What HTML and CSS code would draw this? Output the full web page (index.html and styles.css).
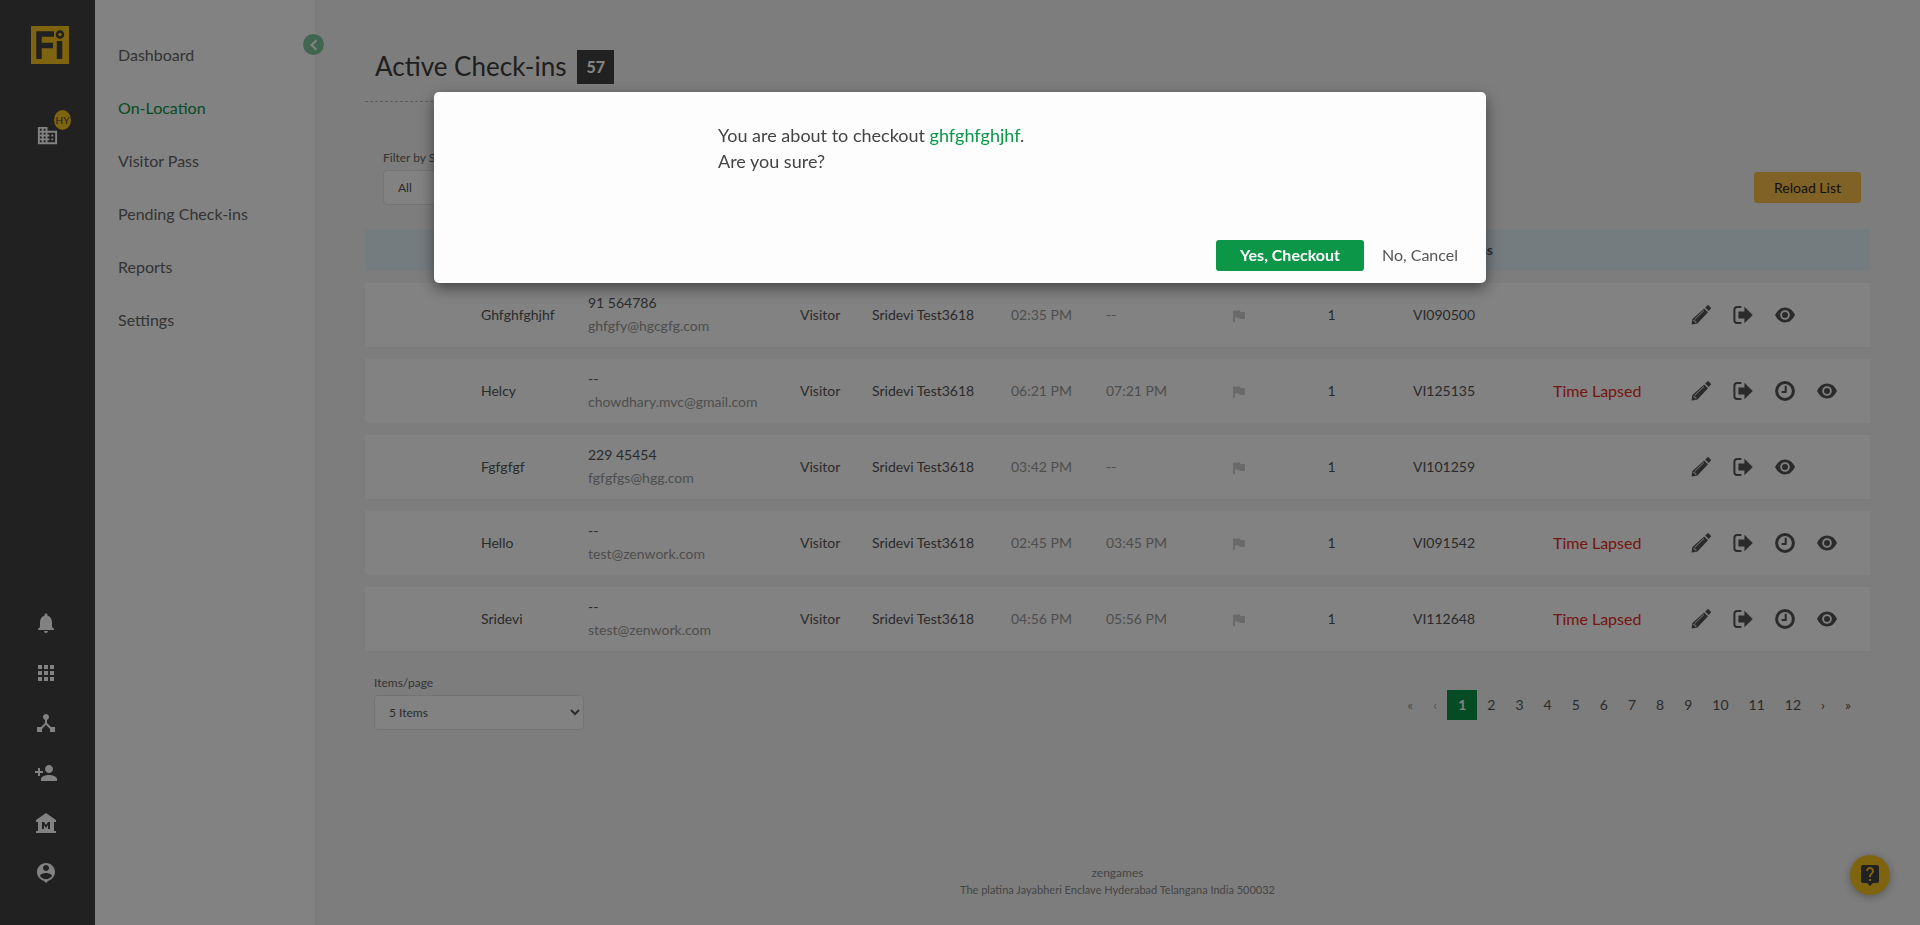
FILE: index.html
```
<!DOCTYPE html>
<html lang="en">
<head>
<meta charset="utf-8">
<title>Active Check-ins</title>
<link rel="stylesheet" href="styles.css">
</head>
<body>
<svg class="sprite" aria-hidden="true">
  <symbol id="pencil" viewBox="0 0 20 20"><path d="M14.2 2.6 16.2.6q.8-.8 1.6 0l1.8 1.8q.8.8 0 1.6l-2 2z"/><path d="M13.2 3.4 17 7.2 6.2 18.8 0.6 19.6 1.2 14.2z"/><path class="cut" d="M3.6 14.6 13 5.4M2.2 15.6l2.4.6.4 2"/></symbol>
  <symbol id="leave" viewBox="0 0 20 20"><path class="line" d="M8.4 2H4.2Q1.4 2 1.4 4.8v10.4Q1.4 18 4.2 18h4.2"/><path d="M5.4 6.4h6V1.8l8.4 8.2-8.4 8.2v-4.6h-6z"/></symbol>
  <symbol id="clock" viewBox="0 0 20 20"><circle class="ring" cx="10" cy="10" r="8.4"/><path class="line" d="M10.7 4.8v6.1H6.6"/></symbol>
  <symbol id="eye" viewBox="0 0 20 20"><path fill-rule="evenodd" d="M0 10Q3.6 2.6 10 2.6T20 10Q16.4 17.4 10 17.4T0 10zM10 5.2a4.8 4.8 0 1 0 0 9.6 4.8 4.8 0 1 0 0-9.6z"/><circle cx="10" cy="10" r="3"/></symbol>
  <symbol id="flag" viewBox="0 0 12 12"><path d="M0 .6h7l.6 1.4H12v7H6.6L6 7.400H2V12H0z"/></symbol>
</svg>

<nav class="rail" aria-label="Main">
  <a class="logo" href="#" aria-label="Home">
    <svg viewBox="0 0 38 38" width="38" height="38"><rect width="38" height="38" fill="#f9c41f"/><g fill="none" stroke="#414141"><path stroke-width="5.500" d="M8 33V5.500M5.500 8H23M8 19.500H22M28.500 15v18"/><circle cx="29" cy="8.500" r="3" stroke-width="2.500"/></g></svg>
  </a>
  <a class="site" href="#" aria-label="Location">
    <svg viewBox="0 0 24 24" width="23" height="23"><path d="M12 7V3H2v18h20V7H12zM6 19H4v-2h2v2zm0-4H4v-2h2v2zm0-4H4V9h2v2zm0-4H4V5h2v2zm4 12H8v-2h2v2zm0-4H8v-2h2v2zm0-4H8V9h2v2zm0-4H8V5h2v2zm10 12h-8v-2h2v-2h-2v-2h2v-2h-2V9h8v10zm-2-8h-2v2h2v-2zm0 4h-2v2h2v-2z"/></svg>
    <span class="initials">HY</span>
  </a>
  <div class="rail-links">
    <a href="#" aria-label="Notifications"><svg viewBox="0 0 24 24"><path d="M12 22c1.100 0 2-.9 2-2h-4c0 1.100.89 2 2 2zm6-6v-5c0-3.070-1.640-5.640-4.500-6.320V4c0-.83-.67-1.500-1.500-1.500s-1.500.67-1.500 1.500v.68C7.630 5.360 6 7.920 6 11v5l-2 2v1h16v-1l-2-2z"/></svg></a>
    <a href="#" aria-label="Apps"><svg viewBox="0 0 24 24"><path d="M4 8h4V4H4v4zm6 12h4v-4h-4v4zm-6 0h4v-4H4v4zm0-6h4v-4H4v4zm6 0h4v-4h-4v4zm6-10v4h4V4h-4zm-6 4h4V4h-4v4zm6 6h4v-4h-4v4zm0 6h4v-4h-4v4z"/></svg></a>
    <a href="#" aria-label="Devices"><svg viewBox="0 0 24 24"><path d="M17 16l-4-4V8.820C14.160 8.400 15 7.300 15 6c0-1.660-1.340-3-3-3S9 4.340 9 6c0 1.300.84 2.400 2 2.820V12l-4 4H3v5h5v-3.050l4-4.200 4 4.200V21h5v-5h-4z"/></svg></a>
    <a href="#" aria-label="Add person"><svg viewBox="0 0 24 24"><path d="M15 12c2.210 0 4-1.790 4-4s-1.790-4-4-4-4 1.790-4 4 1.790 4 4 4zm-9-2V7H4v3H1v2h3v3h2v-3h3v-2H6zm9 4c-2.670 0-8 1.340-8 4v2h16v-2c0-2.660-5.330-4-8-4z"/></svg></a>
    <a href="#" aria-label="Sites"><svg viewBox="0 0 24 24"><path d="M22 11V9L12 2 2 9v2h2v9H2v2h20v-2h-2v-9h2zm-6 7h-2v-4l-2 3-2-3v4H8v-7h2l2 3 2-3h2v7z"/></svg></a>
    <a href="#" aria-label="Profile"><svg viewBox="0 0 24 24"><path d="M12 2c-4.970 0-9 4.030-9 9 0 4.170 2.840 7.670 6.690 8.690L12 22l2.310-2.310C18.160 18.670 21 15.170 21 11c0-4.970-4.030-9-9-9zm0 2c1.660 0 3 1.340 3 3s-1.340 3-3 3-3-1.340-3-3 1.340-3 3-3zm0 14.300c-2.500 0-4.710-1.280-6-3.220.03-1.990 4-3.080 6-3.080 1.990 0 5.970 1.090 6 3.080-1.290 1.940-3.500 3.220-6 3.220z"/></svg></a>
  </div>
</nav>

<nav class="sidebar" aria-label="Section">
  <a href="#">Dashboard</a>
  <a class="current" href="#">On-Location</a>
  <a href="#">Visitor Pass</a>
  <a href="#">Pending Check-ins</a>
  <a href="#">Reports</a>
  <a href="#">Settings</a>
  <button class="collapse" type="button" aria-label="Collapse menu"><svg viewBox="0 0 12 12" width="12" height="12"><path d="M8.500 1.200 3.600 6l4.900 4.800"/></svg></button>
</nav>

<main class="main">
  <header class="heading"><h1>Active Check-ins</h1><span class="count">57</span></header>

  <form class="filters">
    <div class="field short"><label for="status">Filter by Status</label><select id="status"><option>All</option></select></div>
    <div class="field short"><select aria-label="Option"><option>Choose your option</option></select></div>
    <div class="field"><input type="text" aria-label="Search" placeholder="Type to search"></div>
    <button class="reload" type="button">Reload List</button>
  </form>

  <table class="visits">
    <colgroup><col class="w103"><col class="w107"><col class="w212"><col class="w72"><col class="w140"><col class="w95"><col class="w95"><col class="w100"><col class="w85"><col class="w137"><col class="w159"><col class="w200"></colgroup>
    <thead><tr><th></th><th></th><th></th><th></th><th></th><th></th><th></th><th></th><th></th><th class="pass">Visitor Pass</th><th></th><th></th></tr></thead>
    <tbody>
      <tr><td></td><td>Ghfghfghjhf</td><td>91 564786<br><span class="soft">ghfgfy@hgcgfg.com</span></td><td>Visitor</td><td>Sridevi Test3618</td><td class="time">02:35 PM</td><td class="time">--</td><td class="mid"><svg class="flag"><use href="#flag"/></svg></td><td class="mid">1</td><td class="mid code">VI090500</td><td></td>
        <td><div class="actions"><button type="button" aria-label="Edit"><svg><use href="#pencil"/></svg></button><button type="button" aria-label="Check out"><svg><use href="#leave"/></svg></button><button type="button" aria-label="View"><svg><use href="#eye"/></svg></button></div></td></tr>
      <tr><td></td><td>Helcy</td><td>--<br><span class="soft">chowdhary.mvc@gmail.com</span></td><td>Visitor</td><td>Sridevi Test3618</td><td class="time">06:21 PM</td><td class="time">07:21 PM</td><td class="mid"><svg class="flag"><use href="#flag"/></svg></td><td class="mid">1</td><td class="mid code">VI125135</td><td class="lapsed">Time Lapsed</td>
        <td><div class="actions"><button type="button" aria-label="Edit"><svg><use href="#pencil"/></svg></button><button type="button" aria-label="Check out"><svg><use href="#leave"/></svg></button><button type="button" aria-label="Extend time"><svg><use href="#clock"/></svg></button><button type="button" aria-label="View"><svg><use href="#eye"/></svg></button></div></td></tr>
      <tr><td></td><td>Fgfgfgf</td><td>229 45454<br><span class="soft">fgfgfgs@hgg.com</span></td><td>Visitor</td><td>Sridevi Test3618</td><td class="time">03:42 PM</td><td class="time">--</td><td class="mid"><svg class="flag"><use href="#flag"/></svg></td><td class="mid">1</td><td class="mid code">VI101259</td><td></td>
        <td><div class="actions"><button type="button" aria-label="Edit"><svg><use href="#pencil"/></svg></button><button type="button" aria-label="Check out"><svg><use href="#leave"/></svg></button><button type="button" aria-label="View"><svg><use href="#eye"/></svg></button></div></td></tr>
      <tr><td></td><td>Hello</td><td>--<br><span class="soft">test@zenwork.com</span></td><td>Visitor</td><td>Sridevi Test3618</td><td class="time">02:45 PM</td><td class="time">03:45 PM</td><td class="mid"><svg class="flag"><use href="#flag"/></svg></td><td class="mid">1</td><td class="mid code">VI091542</td><td class="lapsed">Time Lapsed</td>
        <td><div class="actions"><button type="button" aria-label="Edit"><svg><use href="#pencil"/></svg></button><button type="button" aria-label="Check out"><svg><use href="#leave"/></svg></button><button type="button" aria-label="Extend time"><svg><use href="#clock"/></svg></button><button type="button" aria-label="View"><svg><use href="#eye"/></svg></button></div></td></tr>
      <tr><td></td><td>Sridevi</td><td>--<br><span class="soft">stest@zenwork.com</span></td><td>Visitor</td><td>Sridevi Test3618</td><td class="time">04:56 PM</td><td class="time">05:56 PM</td><td class="mid"><svg class="flag"><use href="#flag"/></svg></td><td class="mid">1</td><td class="mid code">VI112648</td><td class="lapsed">Time Lapsed</td>
        <td><div class="actions"><button type="button" aria-label="Edit"><svg><use href="#pencil"/></svg></button><button type="button" aria-label="Check out"><svg><use href="#leave"/></svg></button><button type="button" aria-label="Extend time"><svg><use href="#clock"/></svg></button><button type="button" aria-label="View"><svg><use href="#eye"/></svg></button></div></td></tr>
    </tbody>
  </table>

  <div class="paging">
    <div class="field per-page"><label for="items">Items/page</label><select id="items"><option>5 Items</option></select></div>
    <nav class="pages" aria-label="Pages">
      <a class="off" href="#">«</a><a class="off" href="#">‹</a><a class="on" href="#">1</a><a href="#">2</a><a href="#">3</a><a href="#">4</a><a href="#">5</a><a href="#">6</a><a href="#">7</a><a href="#">8</a><a href="#">9</a><a href="#">10</a><a href="#">11</a><a href="#">12</a><a href="#">›</a><a href="#">»</a>
    </nav>
  </div>

  <footer class="footer"><p class="company">zengames</p><p>The platina Jayabheri Enclave Hyderabad Telangana India 500032</p></footer>
</main>

<button class="help" type="button" aria-label="Help"><svg viewBox="0 0 24 24" width="24" height="24"><path d="M19 2H5c-1.110 0-2 .9-2 2v14c0 1.100.89 2 2 2h4l3 3 3-3h4c1.100 0 2-.9 2-2V4c0-1.100-.9-2-2-2zm-6 16h-2v-2h2v2zm2.070-7.750l-.9.92C13.450 11.900 13 12.500 13 14h-2v-.5c0-1.100.45-2.100 1.170-2.830l1.240-1.260c.37-.36.59-.86.59-1.410 0-1.100-.9-2-2-2s-2 .9-2 2H8c0-2.210 1.790-4 4-4s4 1.790 4 4c0 .88-.36 1.680-.93 2.250z"/></svg></button>

<div class="overlay">
  <section class="dialog" role="dialog" aria-modal="true" aria-labelledby="question">
    <p class="question" id="question">You are about to checkout <span class="who">ghfghfghjhf</span>.<br>Are you sure?</p>
    <div class="choices"><button class="yes" type="button">Yes, Checkout</button><button class="no" type="button">No, Cancel</button></div>
  </section>
</div>
</body>
</html>
```
FILE: styles.css
```
* { box-sizing: border-box; }
body { margin: 0; display: flex; min-height: 100vh; background: #f6f6f6; color: #555; font: 14px/20px Lato, sans-serif; }
a { color: inherit; text-decoration: none; }
button { border: 0; padding: 0; background: none; color: inherit; font: inherit; }
h1, p { margin: 0; font-weight: 400; }
svg { display: block; }
.sprite { position: absolute; width: 0; height: 0; }

.rail { width: 95px; flex: none; display: flex; flex-direction: column; padding: 26px 0 40px; background: #414141; fill: #fff; }
.logo { margin-left: 31px; }
.site { position: relative; width: 23px; margin: 60px 0 0 36px; }
.initials { position: absolute; left: 18px; top: -14px; width: 17px; height: 20px; border-radius: 50%; background: #f9c41f; color: #414141; font-size: 10px; text-align: center; }
.rail-links { margin-top: auto; display: flex; flex-direction: column; gap: 26px; padding-left: 34px; }
.rail-links svg { width: 24px; height: 24px; }

.sidebar { position: relative; width: 220px; flex: none; display: flex; flex-direction: column; gap: 33px; padding: 45px 0 0 23px; background: #fff; color: #666; font-size: 16px; }
.current { color: #0b9648; }
.collapse { position: absolute; right: -9px; top: 34px; width: 21px; height: 21px; border-radius: 50%; display: grid; place-items: center; background: #7fc99c; }
.collapse path { fill: none; stroke: #fff; stroke-width: 2; }

.main { flex: 1; min-width: 0; display: flex; flex-direction: column; padding: 50px 50px 27px; }
.heading { width: 60%; display: flex; align-items: center; gap: 11px; padding: 0 0 17px 10px; border-bottom: 1px dashed #b5b5b5; color: #3d3d3d; }
h1 { font-size: 26px; line-height: 32px; padding-bottom: 2px; }
.count { padding: 7px 9px; background: #414141; color: #fff; font-size: 16px; font-weight: 900; }

.filters { display: flex; align-items: flex-end; gap: 35px; padding: 46px 9px 0 18px; }
.field { display: flex; flex-direction: column; gap: 2px; width: 170px; font-size: 12px; color: #666; }
.short { width: 149px; }
.field select, .field input { width: 100%; height: 35px; padding: 0 10px; border: 1px solid #e4e4e4; border-radius: 4px; background: #fff; color: #555; font: 12px Lato, sans-serif; }
.reload { margin: 0 0 2px auto; height: 31px; padding: 0 20px; border-radius: 3px; background: #fdc04c; color: #222; }

.visits { width: 100%; margin-top: 12px; table-layout: fixed; border-collapse: separate; border-spacing: 0 12px; }
.w103 { width: 103px; } .w107 { width: 107px; } .w212 { width: 212px; } .w72 { width: 72px; }
.w140 { width: 140px; } .w95 { width: 95px; } .w100 { width: 100px; } .w85 { width: 85px; }
.w137 { width: 137px; } .w159 { width: 159px; } .w200 { width: 200px; }
.visits th { height: 42px; padding: 0; background: #e6f3fb; font-weight: 700; }
.visits .pass { padding-right: 18px; text-align: right; }
.visits td { height: 64px; padding: 0 0 2px 13px; background: #fff; line-height: 23px; }
.visits td:last-child { padding: 0 0 0 21px; }
.visits .mid { padding: 0 0 2px; text-align: center; }
.visits .code { padding-left: 3px; }
.visits .time { padding-left: 12px; }
.soft, .time { color: #999; }
.visits .lapsed { padding-left: 42px; color: #e52b20; font-size: 16px; }
.flag { width: 12px; height: 12px; margin: 4px auto 0; fill: #d0d0d0; }
.actions { display: flex; gap: 22px; }
.actions svg { width: 20px; height: 20px; fill: #555; }
.line { fill: none; stroke: #555; stroke-width: 2; }
.ring { fill: none; stroke: #555; stroke-width: 3; }
.cut { fill: none; stroke: #eee; stroke-width: 1; }

.paging { display: flex; justify-content: space-between; align-items: flex-end; padding: 10px 9px 0; }
.per-page { width: 210px; }
.pages { display: flex; margin-bottom: 10px; }
.pages a { padding: 5px 10px; color: #555; }
.pages .off { color: #999; }
.pages .on { padding: 5px 11px; background: #0b9648; color: #fff; font-weight: 700; }
.footer { margin-top: auto; text-align: center; color: #888; font-size: 11px; line-height: 17px; }
.company { font-size: 12px; }

.help { position: fixed; right: 30px; bottom: 30px; width: 40px; height: 40px; border-radius: 50%; display: grid; place-items: center; background: #f9c41f; fill: #414141; box-shadow: 0 2px 10px rgba(0, 0, 0, .3); }

.overlay { position: fixed; inset: 0; display: flex; justify-content: center; align-items: flex-start; padding: 92px 20px 20px; background: rgba(0, 0, 0, .49); }
.dialog { width: 1052px; padding: 30px 12px 12px; border-radius: 5px; background: rgba(255, 255, 255, .985); box-shadow: 0 5px 15px rgba(0, 0, 0, .5); color: #444; }
.question { padding-left: 272px; font-size: 18px; line-height: 26px; }
.who { color: #0b9648; }
.choices { display: flex; justify-content: flex-end; gap: 2px; margin-top: 66px; font-size: 16px; }
.choices button { height: 31px; padding-bottom: 2px; border-radius: 3px; }
.choices .yes { padding-left: 24px; padding-right: 24px; background: #0b9648; color: #fff; font-weight: 700; }
.choices .no { padding-left: 16px; padding-right: 16px; color: #555; }
```
